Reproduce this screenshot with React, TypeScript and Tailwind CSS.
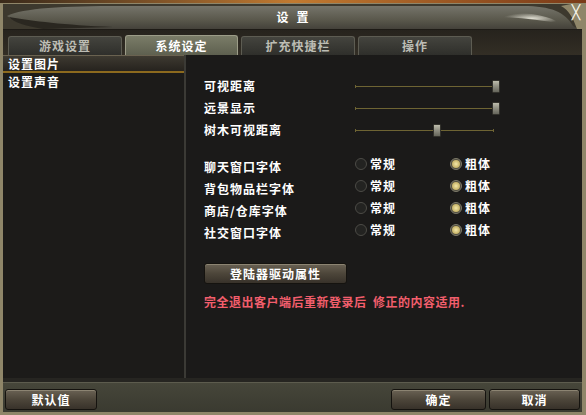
import React from 'react';

const sliders = [
  { label: '可视距离', pos: 137 },
  { label: '远景显示', pos: 137 },
  { label: '树木可视距离', pos: 78 },
];

const fontRows = ['聊天窗口字体', '背包物品栏字体', '商店/仓库字体', '社交窗口字体'];

const tabs = ['游戏设置', '系统设定', '扩充快捷栏', '操作'];

function Slider({ pos }: { pos: number }) {
  return (
    <div className="relative w-[145px] h-[13px] flex items-center">
      <div className="w-[139px] h-[3px] border-x border-[#6e6433] flex items-center">
        <div className="w-full h-px bg-[#6e6433]" />
      </div>
      <div
        className="absolute top-0 w-[8px] h-[13px] rounded-[1px] border border-[#33322c] bg-linear-to-b from-[#bdbcac] via-[#8e8d80] to-[#66665c]"
        style={{ left: pos }}
      />
    </div>
  );
}

function Radio({ on }: { on: boolean }) {
  if (on) {
    return (
      <span className="w-[12px] h-[12px] rounded-full bg-[#4e4b40] border border-[#7d7a68] flex items-center justify-center">
        <span className="w-[8px] h-[8px] rounded-full bg-radial from-[#f4e8a8] to-[#b09a48]" />
      </span>
    );
  }
  return <span className="w-[12px] h-[12px] rounded-full bg-[#232321] border border-[#4c4b46]" />;
}

function Btn({ w, children }: { w: string; children: React.ReactNode }) {
  return (
    <div
      className={`${w} h-[21px] rounded-[3px] border border-[#15130f] bg-linear-to-b from-[#6a6254] via-[#4d463a] to-[#38322a] shadow-[inset_0_1px_0_#8c8472] flex items-center justify-center text-white`}
    >
      {children}
    </div>
  );
}

export default function App() {
  return (
    <div className="w-[586px] h-[415px] overflow-hidden flex flex-col bg-[#8f8669] text-[12px] font-bold tracking-[1px] leading-none font-['Noto_Sans_CJK_SC',sans-serif]">
      {/* game art peeking above the window */}
      <div className="h-[3px] bg-linear-to-r from-[#3a2a1a] via-[#c27a30] to-[#7a3a18]" />

      <div className="flex-1 flex flex-col pt-px pl-[3px] pr-[4px] pb-[3px] bg-[#8f8669]">
        {/* title bar */}
        <div className="relative h-[25px] grid grid-cols-[1fr_auto_1fr] items-center bg-[#3d392e]">
          <svg className="absolute inset-0" width="579" height="25" viewBox="0 0 579 25">
            <defs>
              <linearGradient id="blade" x1="0" y1="0" x2="0" y2="1">
                <stop offset="0" stopColor="#75746a" />
                <stop offset="0.6" stopColor="#5a584c" />
                <stop offset="1" stopColor="#44413a" />
              </linearGradient>
              <radialGradient id="shine" cx="0.5" cy="0.5" r="0.5">
                <stop offset="0" stopColor="#eeece0" />
                <stop offset="1" stopColor="#eeece0" stopOpacity="0" />
              </radialGradient>
            </defs>
            <path d="M4 12 C20 4 60 2 120 2 L520 2 C548 2 562 8 570 22 L575 25 L60 25 C30 22 12 18 4 12 Z" fill="url(#blade)" />
            <path d="M6 13 C30 17 60 21 110 23 L40 25 C22 22 10 18 6 13 Z" fill="#2a2720" />
            <path d="M500 9 C525 8 545 11 558 20 C540 16 520 14 500 13 Z" fill="url(#shine)" opacity="0.9" />
            <path d="M568 0 L579 0 L579 25 L574 25 C570 14 566 6 558 2 Z" fill="#8f8669" />
          </svg>
          <span />
          <span className="relative text-white tracking-[8px] pl-[8px]">设置</span>
          <span className="relative justify-self-end self-start mt-[2px] w-[12px] h-[12px] flex items-center justify-center text-[#fbf8ee] text-[14px] font-normal tracking-normal font-['DejaVu_Sans',sans-serif]">
            ╳
          </span>
        </div>

        {/* tab strip */}
        <div className="h-[26px] flex items-end gap-[3px] pl-[5px] bg-linear-to-b from-[#26231d] to-[#332e25] border-t border-[#1e1b16]">
          {tabs.map((t, i) => (
            <div
              key={t}
              className={
                i === 1
                  ? 'w-[113px] h-[20px] rounded-t-[3px] border border-b-0 border-[#9c9c88] bg-linear-to-b from-[#7a7c68] to-[#5e604f] flex items-center justify-center text-white'
                  : 'w-[114px] h-[19px] rounded-t-[3px] border border-b-0 border-[#5d5c52] bg-linear-to-b from-[#44443e] to-[#2f2f2b] flex items-center justify-center text-[#bdbdb4]'
              }
            >
              {t}
            </div>
          ))}
        </div>

        {/* body */}
        <div className="h-[323px] flex bg-[#1c1b19]">
          <div className="w-[181px] flex flex-col border-t border-[#6a6250]">
            <div className="h-[17px] flex items-center pl-[5px] text-white bg-linear-to-b from-[#3e3a31] to-[#26231e] border-b-2 border-[#8c6a1e]">
              设置图片
            </div>
            <div className="h-[17px] flex items-center pl-[5px] text-white">设置声音</div>
          </div>

          <div className="w-[2px] bg-[#3b3a35]" />

          <div className="flex-1 flex flex-col pl-[18px] pt-[20px] text-white bg-[#1b1a19]">
            {sliders.map((s) => (
              <div key={s.label} className="h-[22px] flex items-center">
                <span className="w-[151px]">{s.label}</span>
                <Slider pos={s.pos} />
              </div>
            ))}

            <div className="mt-[12px] flex flex-col">
              {fontRows.map((r) => (
                <div key={r} className="h-[22px] flex items-center">
                  <span className="w-[151px] pt-[5px]">{r}</span>
                  <div className="w-[95px] flex items-center gap-[3px]">
                    <Radio on={false} />
                    <span>常规</span>
                  </div>
                  <div className="flex items-center gap-[3px]">
                    <Radio on />
                    <span>粗体</span>
                  </div>
                </div>
              ))}
            </div>

            <div className="mt-[22px]">
              <Btn w="w-[143px]">登陆器驱动属性</Btn>
            </div>

            <div className="mt-[12px] text-[#f25e6c] tracking-[0.5px] whitespace-pre">完全退出客户端后重新登录后  修正的内容适用.</div>
          </div>
        </div>

        {/* bottom bar */}
        <div className="h-[34px] flex flex-col">
          <div className="h-[4px] bg-[#262521]" />
          <div className="h-px bg-[#5d5c4e]" />
          <div className="flex-1 flex items-start pt-[6px] px-[2px] gap-[3px] bg-linear-to-b from-[#46463a] to-[#3a3a30]">
            <Btn w="w-[92px]">默认值</Btn>
            <div className="flex-1" />
            <Btn w="w-[95px]">确定</Btn>
            <Btn w="w-[91px]">取消</Btn>
          </div>
        </div>
      </div>
    </div>
  );
}
